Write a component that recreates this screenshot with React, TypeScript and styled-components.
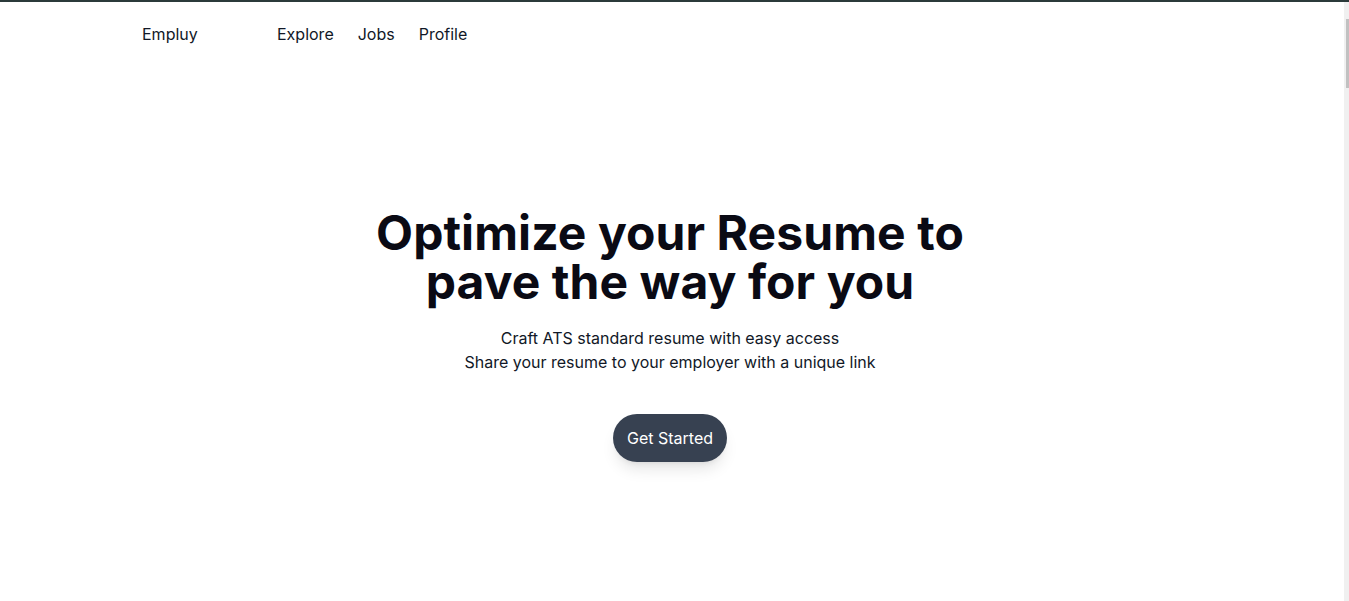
import React from "react";
import styled, { createGlobalStyle } from "styled-components";

const GlobalStyle = createGlobalStyle`
  html, body {
    margin: 0;
    padding: 0;
    height: 100%;
    overflow: hidden;
    background: #ffffff;
  }
  body {
    border-top: 2px solid #2b3a3a;
    box-sizing: border-box;
    font-family: Inter, "Noto Sans", sans-serif;
    color: #111827;
  }
  #root { height: 100%; }
`;

const Frame = styled.div`
  display: flex;
  height: 100%;
`;

const Scroller = styled.div`
  flex: 1;
  min-width: 0;
  height: 100%;
  overflow-y: auto;
  scrollbar-width: none;
  &::-webkit-scrollbar { display: none; }
`;

const Track = styled.div`
  width: 5px;
  flex: none;
  background: #f0f0f0;
  display: flex;
  flex-direction: column;
  align-items: flex-end;
  padding-top: 17px;
  box-sizing: border-box;
`;

const Thumb = styled.div`
  width: 3px;
  height: 69px;
  background: #c1c1c1;
`;

const Container = styled.div`
  max-width: 1060px;
  margin: 0 auto;
`;

const Nav = styled.nav`
  display: flex;
  align-items: center;
  padding-top: 20px;
  height: 24px;
`;

const Brand = styled.a`
  font-size: 16px;
  line-height: 24px;
  color: #111827;
  text-decoration: none;
  width: 135px;
`;

const NavLinks = styled.div`
  display: flex;
  gap: 24px;
`;

const NavLink = styled.a`
  font-size: 16px;
  line-height: 24px;
  color: #111827;
  text-decoration: none;
`;

const Hero = styled.section`
  display: flex;
  flex-direction: column;
  align-items: center;
  text-align: center;
  padding: 162px 4px 0 0;
  min-height: 4400px;
`;

const Title = styled.h1`
  margin: 0;
  font-size: 48px;
  line-height: 49px;
  font-weight: 700;
  color: #0a0a14;
  letter-spacing: 0.08px;
`;

const Sub = styled.p`
  margin: 20px 0 0;
  font-size: 16px;
  line-height: 24px;
  color: #111827;
`;

const Button = styled.button`
  margin-top: 40px;
  font-family: Inter, "Noto Sans", sans-serif;
  font-size: 16px;
  line-height: 24px;
  font-weight: 400;
  color: #ffffff;
  background: #374151;
  border: none;
  border-radius: 9999px;
  padding: 12px 13.5px;
  box-shadow: 0 10px 15px -3px rgba(0,0,0,0.1), 0 4px 6px -4px rgba(0,0,0,0.1);
  cursor: pointer;
`;

export default function App() {
  return (
    <>
      <GlobalStyle />
      <Frame>
        <Scroller>
          <Container>
            <Nav>
              <Brand href="#">Empluy</Brand>
              <NavLinks>
                <NavLink href="#">Explore</NavLink>
                <NavLink href="#">Jobs</NavLink>
                <NavLink href="#">Profile</NavLink>
              </NavLinks>
            </Nav>
          </Container>
          <Hero>
            <Title>
              Optimize your Resume to
              <br />
              pave the way for you
            </Title>
            <Sub>
              Craft ATS standard resume with easy access
              <br />
              Share your resume to your employer with a unique link
            </Sub>
            <Button>Get Started</Button>
          </Hero>
        </Scroller>
        <Track>
          <Thumb />
        </Track>
      </Frame>
    </>
  );
}
